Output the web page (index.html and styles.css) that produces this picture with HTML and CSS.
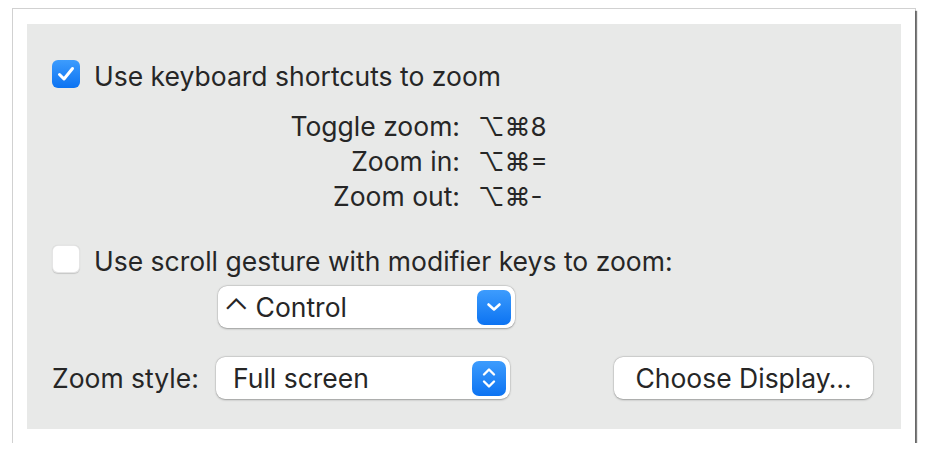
FILE: index.html
```html
<!DOCTYPE html>
<html>
<head>
<meta charset="utf-8">
<link rel="stylesheet" href="styles.css">
</head>
<body>
<div class="frame">
  <div class="panel">
    <div class="check-row row-keys">
      <span class="checkbox checked">
        <svg width="18" height="16" viewBox="0 0 18 16"><path d="M2.5 8.5 L7 13 L15.5 2.5" fill="none" stroke="#fff" stroke-width="3" stroke-linecap="round" stroke-linejoin="round"/></svg>
      </span>
      <span class="label">Use keyboard shortcuts to zoom</span>
    </div>
    <div class="shortcuts">
      <span class="sc-name">Toggle zoom:</span><span class="sc-key">⌥⌘8</span>
      <span class="sc-name">Zoom in:</span><span class="sc-key">⌥⌘=</span>
      <span class="sc-name">Zoom out:</span><span class="sc-key">⌥⌘-</span>
    </div>
    <div class="check-row row-scroll">
      <span class="checkbox"></span>
      <span class="label">Use scroll gesture with modifier keys to zoom:</span>
    </div>
    <div class="popup popup-control">
      <span class="popup-text"><span class="ctrl">⌃</span>Control</span>
      <span class="popup-btn">
        <svg width="18" height="12" viewBox="0 0 18 12"><path d="M3.5 3.5 L9 8.5 L14.5 3.5" fill="none" stroke="#fff" stroke-width="2.6" stroke-linecap="round" stroke-linejoin="round"/></svg>
      </span>
    </div>
    <div class="style-row">
      <span class="style-label">Zoom style:</span>
      <div class="popup popup-style">
        <span class="popup-text">Full screen</span>
        <span class="popup-btn">
          <svg width="18" height="28" viewBox="0 0 18 28"><path d="M4 10.5 L9 5.5 L14 10.5 M4 17.5 L9 22.5 L14 17.5" fill="none" stroke="#fff" stroke-width="2.4" stroke-linecap="round" stroke-linejoin="round"/></svg>
        </span>
      </div>
      <div class="button">Choose Display…</div>
    </div>
  </div>
</div>
</body>
</html>
```
FILE: styles.css
```css
* { box-sizing: border-box; }
body {
  margin: 0;
  background: #ffffff;
  font-family: Inter, "Noto Sans", "DejaVu Sans", sans-serif;
  color: #262626;
}
.frame {
  margin: 9px 0 0 13px;
  width: 902px;
  height: 434px;
  background: #ffffff;
  padding: 15px 14px 14px 14px;
  box-shadow: 2px 2px 1px rgba(0,0,0,0.5), 0 0 0 1px rgba(0,0,0,0.18);
}
.panel {
  background: #e8e9e8;
  height: 405px;
  width: 874px;
  padding: 36px 0 0 25px;
  display: flex;
  flex-direction: column;
}
.check-row {
  display: flex;
  align-items: center;
  height: 28px;
  gap: 14px;
}
.checkbox {
  width: 28px;
  height: 28px;
  border-radius: 6px;
  background: #ffffff;
  box-shadow: inset 0 0 0 1px rgba(0,0,0,0.1), 0 0.5px 1px rgba(0,0,0,0.15);
  display: flex;
  align-items: center;
  justify-content: center;
}
.checkbox.checked {
  background: linear-gradient(#3d9cfd, #0c73f2);
  box-shadow: none;
}
.label {
  font-size: 26.5px;
  line-height: 28px;
  padding-top: 3px;
}
.shortcuts {
  display: grid;
  grid-template-columns: 408px auto;
  column-gap: 18px;
  margin-top: 21px;
  font-size: 26.5px;
  line-height: 35px;
}
.sc-name { text-align: right; }
.sc-key { font-family: Inter, "DejaVu Sans", sans-serif; font-size: 26px; }
.row-scroll { margin-top: 31px; }
.popup {
  background: #ffffff;
  border-radius: 9px;
  height: 42px;
  box-shadow: 0 0.5px 2px rgba(0,0,0,0.3), 0 0 0 0.5px rgba(0,0,0,0.08);
  display: flex;
  align-items: center;
  justify-content: space-between;
  font-size: 26.5px;
}
.popup-control {
  margin: 13px 0 0 166px;
  width: 297px;
  padding: 0 4px 0 5px;
}
.popup-text { display: flex; align-items: center; }
.ctrl {
  font-family: Inter, "DejaVu Sans", sans-serif;
  font-weight: 300;
  font-size: 34px;
  line-height: 20px;
  height: 20px;
  margin-right: 6px;
  display: inline-block;
  transform: translateY(4px);
}
.popup-btn {
  width: 34px;
  height: 35px;
  border-radius: 7px;
  background: linear-gradient(#3d9cfd, #0c73f2);
  display: flex;
  align-items: center;
  justify-content: center;
}
.style-row {
  display: flex;
  align-items: center;
  margin-top: 29px;
  height: 42px;
}
.style-label {
  font-size: 26.5px;
  width: 164px;
}
.popup-style {
  width: 294px;
  padding: 0 4px 0 17px;
}
.button {
  margin-left: 104px;
  width: 259px;
  height: 42px;
  background: #ffffff;
  border-radius: 9px;
  box-shadow: 0 0.5px 2px rgba(0,0,0,0.3), 0 0 0 0.5px rgba(0,0,0,0.08);
  display: flex;
  align-items: center;
  justify-content: center;
  font-size: 26.5px;
}
```
